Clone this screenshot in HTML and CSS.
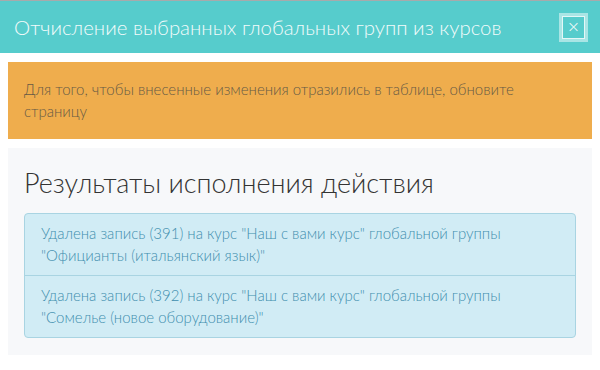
FILE: index.html
```html
<!DOCTYPE html>
<html lang="ru">
<head>
    <meta charset="UTF-8">
    <title>Отчисление выбранных глобальных групп из курсов</title>
    <link rel="stylesheet" href="styles.css">
</head>
<body>
    <div class="modal">
        <div class="modal-header">
            <h3 class="modal-title">Отчисление выбранных глобальных групп из курсов</h3>
            <button class="close-btn"><span class="close-inner">&times;</span></button>
        </div>

        <div class="modal-body">
            <div class="alert-warning">
                Для того, чтобы внесенные изменения отразились в таблице, обновите страницу
            </div>

            <div class="results">
                <h2 class="results-title">Результаты исполнения действия</h2>
                <ul class="result-list">
                    <li class="result-item">Удалена запись (391) на курс "Наш с вами курс" глобальной группы "Официанты (итальянский язык)"</li>
                    <li class="result-item">Удалена запись (392) на курс "Наш с вами курс" глобальной группы "Сомелье (новое оборудование)"</li>
                </ul>
            </div>
        </div>
    </div>
</body>
</html>
```

FILE: styles.css
```css
body {
    margin: 0;
    font-family: Lato, "Open Sans", sans-serif;
    font-weight: 300;
    background: #fff;
}
.modal {
    width: 600px;
}
.modal-header {
    display: flex;
    align-items: center;
    justify-content: space-between;
    height: 52px;
    padding: 0 12px 0 14px;
    background-color: #56cccc;
    border-top: 1px solid #a8aaab;
}
.modal-title {
    margin: 0;
    font-size: 20.4px;
    font-weight: 300;
    color: #f2fbfb;
}
.close-btn {
    width: 29px;
    height: 29px;
    padding: 0;
    border: 3px solid #a9e5e5;
    background: #56cccc;
    display: flex;
    align-items: center;
    justify-content: center;
    cursor: pointer;
}
.close-inner {
    display: flex;
    align-items: center;
    justify-content: center;
    width: 21px;
    height: 21px;
    border: 1px solid #e3f7f7;
    color: #f2fbfb;
    font-family: "DejaVu Sans", sans-serif;
    font-size: 16px;
    font-weight: 300;
    line-height: 1;
}
.modal-body {
    padding: 9px 8px 0;
}
.alert-warning {
    background-color: #efad4d;
    color: #665a45;
    font-size: 15px;
    line-height: 22px;
    padding: 16px 16px 17px;
}
.results {
    margin-top: 9px;
    background-color: #f7f8fa;
    padding: 20px 16px 17px;
}
.results-title {
    margin: 0 0 15px;
    font-size: 27px;
    line-height: 30px;
    font-weight: 300;
    color: #333;
}
.result-list {
    list-style: none;
    margin: 0;
    padding: 0;
    border: 1px solid #a9d4e2;
    border-radius: 4px;
    background-color: #d1ecf5;
}
.result-item {
    padding: 8px 16px 9px;
    font-size: 15px;
    line-height: 22px;
    color: #3f8eae;
}
.result-item + .result-item {
    border-top: 1px solid #a9d4e2;
}
```
